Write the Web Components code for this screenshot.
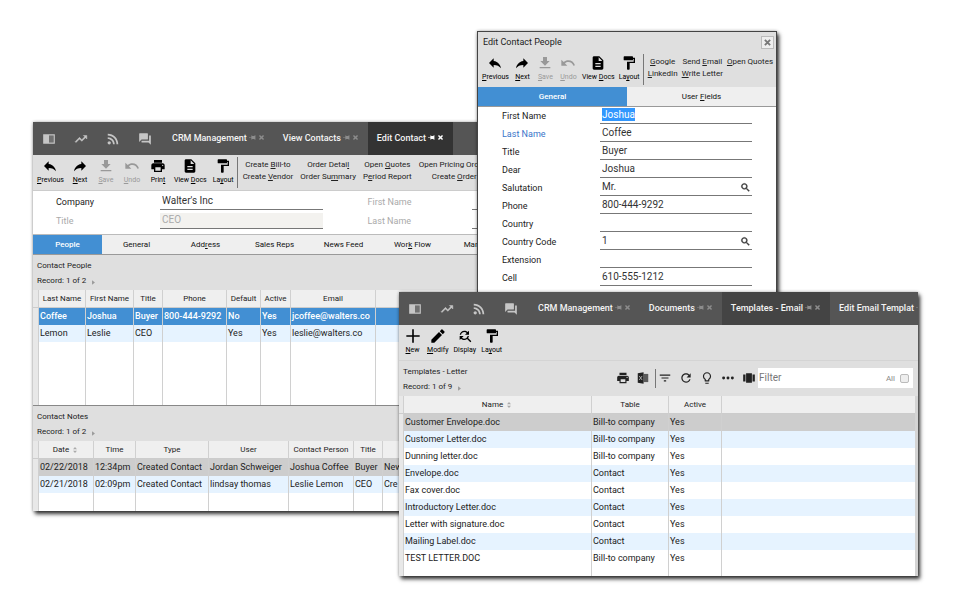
<!DOCTYPE html>
<html lang="en">
<head>
<meta charset="utf-8">
<title>CRM Management</title>
<style>
  html, body {
    margin: 0;
    height: 100%;
  }
  body {
    background: #fff;
    color: #222;
    font-family: Roboto, "Liberation Sans", sans-serif;
    font-size: 9px;
    overflow: hidden;
  }
</style>
</head>
<body>
<crm-desktop></crm-desktop>

<script>
const ICONS = {
  reader: '<path d="M2 4h10v16H2zM12 4h10v16H12v-2h8V6h-8z"/><path d="M12 6h8v12h-8z" opacity=".25"/>',
  trend: '<path d="M16 6l2.29 2.29-4.88 4.88-4-4L2 16.59 3.41 18l6-6 4 4 6.3-6.29L22 12V6z" stroke="currentColor" stroke-width=".8"/>',
  feed: '<circle cx="5.5" cy="18.5" r="2.8"/><path d="M3 3v3c8.300 0 15 6.700 15 15h3C21 11 13 3 3 3zm0 6v3c5 0 9 4 9 9h3c0-6.600-5.400-12-12-12z"/>',
  forum: '<path d="M22 6h-3v9H6v2c0 .55.45 1 1 1h11l4 4V6zm-5 6V3c0-.55-.45-1-1-1H3c-.55 0-1 .45-1 1v14l4-4h10c.55 0 1-.45 1-1z"/>',
  previous: '<path d="M10 9V5l-7 7 7 7v-4.1c5 0 8.5 1.6 11 5.1-1-5-4-10-11-11z"/>',
  next: '<path d="M14 9V5l7 7-7 7v-4.1c-5 0-8.500 1.600-11 5.100 1-5 4-10 11-11z"/>',
  save: '<path d="M19 9h-4V3H9v6H5l7 7 7-7zM4 18v2h16v-2H4z"/>',
  undo: '<path d="M12.500 8c-2.650 0-5.050.990-6.900 2.600L2 7v9h9l-3.620-3.620c1.390-1.160 3.160-1.880 5.120-1.880 3.540 0 6.550 2.310 7.600 5.500l2.370-.78C21.080 11.030 17.150 8 12.500 8z"/>',
  print: '<path d="M19 8H5c-1.660 0-3 1.340-3 3v6h4v4h12v-4h4v-6c0-1.660-1.340-3-3-3zm-3 11H8v-5h8v5zm3-7c-.55 0-1-.45-1-1s.45-1 1-1 1 .45 1 1-.45 1-1 1zm-1-9H6v4h12V3z"/>',
  docs: '<path d="M14 2H6c-1.1 0-2 .9-2 2v16c0 1.1.9 2 2 2h12c1.1 0 2-.9 2-2V8l-6-6zm2 16H8v-2h8v2zm0-4H8v-2h8v2zm-3-5V3.500L18.500 9H13z"/>',
  paint: '<path d="M18 4V3c0-.55-.45-1-1-1H5c-.55 0-1 .45-1 1v4c0 .55.45 1 1 1h12c.55 0 1-.45 1-1V6h1v4H9v11c0 .55.45 1 1 1h2c.55 0 1-.45 1-1v-9h8V4h-3z"/>',
  add: '<path d="M22 13.200h-8.800V22h-2.400v-8.800H2v-2.400h8.800V2h2.400v8.800H22z"/>',
  edit: '<path d="M2 17.500V22h4.500L18 10.500 13.500 6 2 17.500zM21.700 6.800c.4-.4.4-1 0-1.400l-3.100-3.100c-.4-.4-1-.4-1.400 0L14.700 4.800l4.500 4.500z"/>',
  display: '<path d="M11 6c1.380 0 2.630.56 3.540 1.460L12 10h6V4l-2.050 2.050C14.680 4.780 12.930 4 11 4c-3.530 0-6.430 2.610-6.920 6H6.100c.46-2.280 2.480-4 4.900-4zm5.640 9.140c.66-.9 1.120-1.970 1.280-3.140H15.900c-.46 2.280-2.480 4-4.900 4-1.380 0-2.630-.56-3.540-1.460L10 12H4v6l2.050-2.050C7.320 17.220 9.070 18 11 18c1.550 0 2.980-.51 4.140-1.360L20 21.490 21.490 20l-4.850-4.860z"/>',
  excel: '<path d="M13 2L3 4v16l10 2z"/><path d="M13 5h8v14h-8z" opacity=".7"/><path d="M5.500 8.500l5 7m0-7l-5 7" stroke="#bbb" stroke-width="1.500"/>',
  filter: '<path d="M10 18h4v-2h-4v2zM3 6v2h18V6H3zm3 7h12v-2H6v2z"/>',
  refresh: '<path d="M17.650 6.350C16.200 4.900 14.210 4 12 4c-4.420 0-7.990 3.580-7.990 8s3.570 8 7.990 8c3.730 0 6.840-2.550 7.730-6h-2.080c-.82 2.330-3.040 4-5.650 4-3.310 0-6-2.690-6-6s2.690-6 6-6c1.660 0 3.140.69 4.220 1.780L13 11h7V4l-2.350 2.350z"/>',
  bulb: '<path d="M9 21c0 .55.45 1 1 1h4c.55 0 1-.45 1-1v-1H9v1zm3-19C8.140 2 5 5.140 5 9c0 2.380 1.190 4.470 3 5.740V17c0 .55.45 1 1 1h6c.55 0 1-.45 1-1v-2.260c1.810-1.270 3-3.360 3-5.740 0-3.860-3.140-7-7-7zm2.850 11.100l-.85.6V16h-4v-2.300l-.85-.6C7.800 12.160 7 10.630 7 9c0-2.760 2.240-5 5-5s5 2.240 5 5c0 1.630-.8 3.160-2.150 4.100z"/>',
  more: '<circle cx="4.500" cy="12" r="2.500"/><circle cx="12" cy="12" r="2.500"/><circle cx="19.500" cy="12" r="2.500"/>',
  carousel: '<path d="M7 20h10V4H7v16zm-5-2h4V6H2v12zM18 6v12h4V6h-4z"/>',
  search: '<path d="M15.500 14h-.79l-.28-.27C15.410 12.590 16 11.110 16 9.500 16 5.910 13.090 3 9.500 3S3 5.910 3 9.500 5.910 16 9.500 16c1.610 0 3.090-.59 4.230-1.570l.27.28v.79l5 4.990L20.490 19l-4.990-5zm-6 0C7.010 14 5 11.990 5 9.500S7.010 5 9.500 5 14 7.010 14 9.500 11.990 14 9.500 14z" stroke="currentColor"/>',
  pin: '<path d="M0 11h8V5h3v2h8V4h3v16h-3v-3h-8v2H8v-6H0z"/>',
  close: '<path d="M5 5l14 14M19 5L5 19" stroke="currentColor" stroke-width="5"/>',
  sort: '<path d="M12 3l6 7H6zM12 21l6-7H6z"/>',
  right: '<path d="M7 4l10 8-10 8z"/>',
};

// "_Save" -> underlined S
function accel(text) {
  return text.replace(/_(.)/, "<u>$1</u>");
}

class IconGlyph extends HTMLElement {
  connectedCallback() {
    if (this.shadowRoot) return;
    this.attachShadow({ mode: "open" }).innerHTML = `
      <style>
        :host { display: inline-block; flex: none; width: 16px; height: 16px; }
        svg { display: block; width: 100%; height: 100%; fill: currentColor; }
      </style>
      <svg viewBox="0 0 24 24" aria-hidden="true">${ICONS[this.getAttribute("name")]}</svg>`;
  }
}
customElements.define("icon-glyph", IconGlyph);

class ToolButton extends HTMLElement {
  connectedCallback() {
    if (this.shadowRoot) return;
    const off = this.hasAttribute("disabled");
    this.attachShadow({ mode: "open" }).innerHTML = `
      <style>
        :host { display: block; flex: none; }
        button {
          display: flex;
          flex-direction: column;
          align-items: center;
          min-width: var(--tool-min, 20px);
          padding: 0;
          border: 0;
          background: none;
          color: #000;
          font: 7px/13px Roboto, sans-serif;
          white-space: nowrap;
        }
        button:disabled { color: #999; }
      </style>
      <button type="button" ${off ? "disabled" : ""}>
        <icon-glyph name="${this.getAttribute("icon")}"></icon-glyph>
        <span>${accel(this.getAttribute("label"))}</span>
      </button>`;
  }
}
customElements.define("tool-button", ToolButton);

// Pairs of links stacked in centred columns
class LinkColumn extends HTMLElement {
  connectedCallback() {
    if (this.shadowRoot) return;
    const links = this.getAttribute("links").split("|");
    this.attachShadow({ mode: "open" }).innerHTML = `
      <style>
        :host { display: flex; flex: none; flex-direction: column; align-items: center; }
        a { color: #222; font-size: 8px; line-height: 12px; text-decoration: none; white-space: nowrap; }
      </style>
      ${links.map((l) => `<a href="#">${accel(l)}</a>`).join("")}`;
  }
}
customElements.define("link-column", LinkColumn);

class ToolStrip extends HTMLElement {
  constructor() {
    super();
    this.attachShadow({ mode: "open" }).innerHTML = `
      <style>
        :host { display: flex; height: 31px; padding: 3px 0 1px 4px; overflow: hidden; background: #dfdfdf; }
        .tools { display: flex; gap: var(--tool-gap, 6px); }
        .links {
          display: flex;
          flex: none;
          gap: var(--link-gap, 7px);
          height: 31px;
          margin: -1px 0 0 3px;
          padding: 2px 0 0 var(--link-pad, 5px);
          border-left: 1px solid #777;
          box-sizing: border-box;
        }
        .links[hidden] { display: none; }
      </style>
      <div class="tools"><slot></slot></div>
      <nav class="links"><slot name="links"></slot></nav>`;
  }

  connectedCallback() {
    this.shadowRoot.querySelector(".links").hidden = this.hasAttribute("plain");
  }
}
customElements.define("tool-strip", ToolStrip);

// Dark bar with the module icons and the open pages
class PageBar extends HTMLElement {
  connectedCallback() {
    if (this.shadowRoot) return;
    const pages = this.getAttribute("pages").split("|");
    const active = this.getAttribute("active");
    this.attachShadow({ mode: "open" }).innerHTML = `
      <style>
        :host { display: flex; height: 33px; background: #555; overflow: hidden; }
        button { padding: 0; border: 0; background: none; color: inherit; font: inherit; white-space: nowrap; }
        .modules { display: flex; flex: none; gap: 18px; align-items: center; padding: 0 11px 0 9px; color: #c6c6c6; }
        .modules icon-glyph { display: block; width: 14px; height: 14px; }
        .page { display: flex; flex: none; align-items: center; gap: 2px; padding: 0 9px 2px; color: #f4f4f4; font-size: 9px; font-weight: 500; }
        .page .small { display: block; color: #8c8c8c; }
        .page icon-glyph { display: block; width: 7px; height: 7px; }
        .page.on { background: var(--page-on, #333); }
        .page.on .small { color: var(--page-mark, #fff); }
      </style>
      <div class="modules">
        ${["reader", "trend", "feed", "forum"]
          .map((n) => `<button type="button" aria-label="${n}"><icon-glyph name="${n}"></icon-glyph></button>`)
          .join("")}
      </div>
      ${pages
        .map((p) => `
          <div class="page ${p === active ? "on" : ""}">
            <button type="button">${p}</button>
            <button type="button" class="small" aria-label="Pin"><icon-glyph name="pin"></icon-glyph></button>
            <button type="button" class="small" aria-label="Close"><icon-glyph name="close"></icon-glyph></button>
          </div>`)
        .join("")}`;
  }
}
customElements.define("page-bar", PageBar);

class TabRow extends HTMLElement {
  connectedCallback() {
    if (this.shadowRoot) return;
    const tabs = this.getAttribute("tabs").split("|");
    this.attachShadow({ mode: "open" }).innerHTML = `
      <style>
        :host { display: flex; height: 19px; background: #efefef; border-bottom: 1px solid #999; overflow: hidden; }
        button { flex: 0 0 var(--tab-width, 10%); padding: 0; border: 0; background: none; color: #111; font: 8px/19px Roboto, sans-serif; white-space: nowrap; }
        button[aria-selected="true"] { background: #428fd3; color: #fff; font-weight: 500; }
      </style>
      ${tabs.map((t, i) => `<button type="button" role="tab" aria-selected="${i === 0}">${accel(t)}</button>`).join("")}`;
    this.setAttribute("role", "tablist");
  }
}
customElements.define("tab-row", TabRow);

class TextField extends HTMLElement {
  connectedCallback() {
    if (this.shadowRoot) return;
    const lookup = this.hasAttribute("lookup")
      ? '<button type="button" aria-label="Look up"><icon-glyph name="search"></icon-glyph></button>'
      : "";
    this.attachShadow({ mode: "open" }).innerHTML = `
      <style>
        :host { display: flex; height: 16px; }
        label { flex: none; width: var(--label-width, 104px); font-size: 9px; line-height: 17px; white-space: nowrap; }
        .box { display: flex; flex: 1; min-width: 0; border-bottom: 1px solid #777; }
        input { flex: 1; min-width: 0; height: 13px; padding: 0 2px; border: 0; outline: 0; background: none; color: #333; font: 10px/13px Roboto, sans-serif; }
        input::selection { background: #3297fd; color: #fff; }
        button { padding: 0 1px; border: 0; background: none; color: #333; }
        icon-glyph { display: block; width: 11px; height: 11px; }
        :host([muted]) label, :host([muted]) input { color: #aaa; }
        :host([shaded]) .box { background: #f3f2ef; }
        :host([accent]) label { color: #3a75c9; }
      </style>
      <label for="f">${this.getAttribute("label")}</label>
      <div class="box"><input id="f" type="text" value="${this.getAttribute("value") || ""}">${lookup}</div>`;
    if (this.hasAttribute("selected")) {
      const input = this.shadowRoot.querySelector("input");
      input.focus();
      input.select();
    }
  }
}
customElements.define("text-field", TextField);

class RecordHead extends HTMLElement {
  constructor() {
    super();
    this.attachShadow({ mode: "open" });
  }

  connectedCallback() {
    this.shadowRoot.innerHTML = `
      <style>
        :host { display: flex; justify-content: space-between; height: 35px; box-sizing: border-box; padding: 3px 5px 0 4px; background: #dfdfdf; }
        h2, p { margin: 0; font-size: 8px; font-weight: 400; line-height: 15px; white-space: nowrap; }
        p { display: flex; align-items: center; gap: 4px; }
        p icon-glyph { width: 7px; height: 7px; margin-top: 3px; color: #999; }
      </style>
      <div>
        <h2>${this.getAttribute("heading")}</h2>
        <p>Record: ${this.getAttribute("record")} <icon-glyph name="right"></icon-glyph></p>
      </div>
      <slot></slot>`;
  }
}
customElements.define("record-head", RecordHead);

class FilterTools extends HTMLElement {
  constructor() {
    super();
    this.attachShadow({ mode: "open" }).innerHTML = `
      <style>
        :host { display: flex; align-items: center; height: 28px; color: #222; }
        button { padding: 0; border: 0; background: none; color: inherit; }
        button icon-glyph { display: block; width: 14px; height: 14px; }
        .output, .view { display: flex; align-items: center; height: 19px; }
        .output { gap: 6px; padding-right: 5px; border-right: 1px solid #777; }
        .view { gap: 7px; padding: 0 2px; }
        .search { display: flex; align-items: center; width: 155px; height: 20px; background: #fff; color: #888; }
        .search input[type="text"] { flex: 1; min-width: 0; padding: 0 1px; border: 0; outline: 0; background: none; font: 10px/20px Roboto, sans-serif; }
        .search input::placeholder { color: #777; }
        .search label { font-size: 8px; }
        .search input[type="checkbox"] { appearance: none; width: 9px; height: 9px; margin: 0 4px 0 5px; border: 1px solid #bbb; border-radius: 2px; background: #eee; }
      </style>
      <div class="output">
        <button type="button" aria-label="Print"><icon-glyph name="print"></icon-glyph></button>
        <button type="button" aria-label="Export"><icon-glyph name="excel"></icon-glyph></button>
      </div>
      <div class="view">
        <button type="button" aria-label="Filters"><icon-glyph name="filter"></icon-glyph></button>
        <button type="button" aria-label="Refresh"><icon-glyph name="refresh"></icon-glyph></button>
        <button type="button" aria-label="Hints"><icon-glyph name="bulb"></icon-glyph></button>
        <button type="button" aria-label="More"><icon-glyph name="more"></icon-glyph></button>
        <button type="button" aria-label="Columns"><icon-glyph name="carousel"></icon-glyph></button>
      </div>
      <div class="search">
        <input type="text" placeholder="Filter" aria-label="Filter">
        <label for="all">All</label><input type="checkbox" id="all">
      </div>`;
  }
}
customElements.define("filter-tools", FilterTools);

const GRIDS = {
  people: {
    columns: [["Last Name", 47], ["First Name", 48], ["Title", 29], ["Phone", 64], ["Default", 34], ["Active", 30], ["Email", 85], ["", 0]],
    rows: [
      ["Coffee", "Joshua", "Buyer", "800-444-9292", "No", "Yes", "jcoffee@walters.co", ""],
      ["Lemon", "Leslie", "CEO", "", "Yes", "Yes", "leslie@walters.co", ""],
    ],
  },
  notes: {
    columns: [["Date", 55], ["Time", 42], ["Type", 73], ["User", 80], ["Contact Person", 65], ["Title", 29], ["", 0]],
    sort: "Date",
    rows: [
      ["02/22/2018", "12:34pm", "Created Contact", "Jordan Schweiger", "Joshua Coffee", "Buyer", "New"],
      ["02/21/2018", "02:09pm", "Created Contact", "lindsay thomas", "Leslie Lemon", "CEO", "Cre"],
    ],
  },
  templates: {
    columns: [["Name", 188], ["Table", 77], ["Active", 53], ["", 0]],
    sort: "Name",
    rows: [
      ["Customer Envelope.doc", "Bill-to company", "Yes", ""],
      ["Customer Letter.doc", "Bill-to company", "Yes", ""],
      ["Dunning letter.doc", "Bill-to company", "Yes", ""],
      ["Envelope.doc", "Contact", "Yes", ""],
      ["Fax cover.doc", "Contact", "Yes", ""],
      ["Introductory Letter.doc", "Contact", "Yes", ""],
      ["Letter with signature.doc", "Contact", "Yes", ""],
      ["Mailing Label.doc", "Contact", "Yes", ""],
      ["TEST LETTER.DOC", "Bill-to company", "Yes", ""],
    ],
  },
};

class DataGrid extends HTMLElement {
  connectedCallback() {
    if (this.shadowRoot) return;
    const grid = GRIDS[this.getAttribute("source")];
    const mark = (name) => (name === grid.sort ? ' <icon-glyph name="sort"></icon-glyph>' : "");
    this.attachShadow({ mode: "open" }).innerHTML = `
      <style>
        :host { display: block; background: #fff; border-right: 3px solid #d4d4d4; }
        table { width: 100%; table-layout: fixed; border-collapse: separate; border-spacing: 0; }
        .gutter { width: var(--gutter, 6px); }
        th, td { height: 17px; padding: 0 0 0 1px; box-sizing: border-box; border-right: 1px solid #d0d0d0; text-align: left; white-space: nowrap; overflow: hidden; }
        th { height: 18px; padding: 0; border-bottom: 1px solid #ccc; background: #efefef; font-size: 8px; font-weight: 400; line-height: 17px; text-align: center; }
        td { font-size: 9px; line-height: 17px; }
        th:last-child, td:last-child { border-right: 0; }
        th:first-child, td:first-child { background: #e8e8e8; }
        tr:nth-child(even) td:not(:first-child) { background: #e6f3ff; }
        tbody tr:first-child td:not(:first-child) { background: #cdcdcd; }
        :host([focused]) tbody tr:first-child td:not(:first-child) { background: #428fd3; color: #fff; font-weight: 500; }
        .rest td { height: var(--rest, 0); line-height: 0; }
        th icon-glyph { width: 8px; height: 8px; color: #aaa; vertical-align: middle; }
      </style>
      <table>
        <colgroup><col class="gutter">${grid.columns.map(([, w]) => `<col${w ? ` style="width: ${w}px"` : ""}>`).join("")}</colgroup>
        <thead><tr><th></th>${grid.columns.map(([n]) => `<th scope="col">${n}${mark(n)}</th>`).join("")}</tr></thead>
        <tbody>
          ${grid.rows.map((r) => `<tr><td></td>${r.map((c) => `<td>${c}</td>`).join("")}</tr>`).join("")}
        </tbody>
        <tfoot><tr class="rest"><td></td>${grid.columns.map(() => "<td></td>").join("")}</tr></tfoot>
      </table>`;
  }
}
customElements.define("data-grid", DataGrid);

class ContactWindow extends HTMLElement {
  constructor() {
    super();
    this.attachShadow({ mode: "open" }).innerHTML = `
      <style>
        :host { display: block; background: #dfdfdf; }
        .strip { border-bottom: 1px solid #ccc; }
        form { display: grid; grid-template-columns: 1fr 1fr; gap: 3px 45px; padding: 3px 89px 5px 23px; border-bottom: 1px solid #bbb; background: #fff; }
        .people { --rest: 63px; border-bottom: 1px solid #888; }
        .notes { --rest: 18px; }
      </style>
      <page-bar pages="CRM Management|View Contacts|Edit Contact" active="Edit Contact"></page-bar>
      <tool-strip class="strip">
        <tool-button icon="previous" label="_Previous"></tool-button>
        <tool-button icon="next" label="_Next"></tool-button>
        <tool-button icon="save" label="_Save" disabled></tool-button>
        <tool-button icon="undo" label="_Undo" disabled></tool-button>
        <tool-button icon="print" label="Prin_t"></tool-button>
        <tool-button icon="docs" label="View _Docs"></tool-button>
        <tool-button icon="paint" label="La_yout"></tool-button>
        <link-column slot="links" links="Create _Bill-to|Create _Vendor"></link-column>
        <link-column slot="links" links="Order Detai_l|Order Su_mmary"></link-column>
        <link-column slot="links" links="Open _Quotes|P_eriod Report"></link-column>
        <link-column slot="links" links="Open Pricing Orders|Create _Order"></link-column>
      </tool-strip>
      <form>
        <text-field label="Company" value="Walter's Inc"></text-field>
        <text-field label="First Name" muted></text-field>
        <text-field label="Title" value="CEO" muted shaded></text-field>
        <text-field label="Last Name" muted></text-field>
      </form>
      <tab-row tabs="People|General|Add_ress|Sales Reps|News Feed|Wor_k Flow|Marketing"></tab-row>
      <record-head heading="Contact People" record="1 of 2"></record-head>
      <data-grid class="people" source="people" focused></data-grid>
      <record-head heading="Contact Notes" record="1 of 2"></record-head>
      <data-grid class="notes" source="notes"></data-grid>`;
  }
}
customElements.define("contact-window", ContactWindow);

class PeopleDialog extends HTMLElement {
  constructor() {
    super();
    this.attachShadow({ mode: "open" }).innerHTML = `
      <style>
        :host { display: block; background: #fff; border: 1px solid #444; --tool-min: 19px; --tool-gap: 4px; --link-gap: 4px; --link-pad: 4px; --tab-width: 50%; --label-width: 98px; }
        header { display: flex; align-items: center; justify-content: space-between; height: 20px; padding: 0 2px 0 5px; background: #dfdfdf; }
        h1 { margin: 0; font-size: 9px; font-weight: 400; }
        header button { padding: 1px; border: 1px solid #bbb; background: #eee; color: #777; }
        header icon-glyph { display: block; width: 9px; height: 9px; }
        form { display: grid; gap: 2px; padding: 1px 24px 0 24px; }
      </style>
      <header>
        <h1>Edit Contact People</h1>
        <button type="button" aria-label="Close"><icon-glyph name="close"></icon-glyph></button>
      </header>
      <tool-strip>
        <tool-button icon="previous" label="_Previous"></tool-button>
        <tool-button icon="next" label="_Next"></tool-button>
        <tool-button icon="save" label="_Save" disabled></tool-button>
        <tool-button icon="undo" label="_Undo" disabled></tool-button>
        <tool-button icon="docs" label="View _Docs"></tool-button>
        <tool-button icon="paint" label="La_yout"></tool-button>
        <link-column slot="links" links="_Google|_LinkedIn"></link-column>
        <link-column slot="links" links="Send _Email|_Write Letter"></link-column>
        <link-column slot="links" links="_Open Quotes"></link-column>
      </tool-strip>
      <tab-row tabs="General|User _Fields"></tab-row>
      <form>
        <text-field label="First Name" value="Joshua" selected></text-field>
        <text-field label="Last Name" value="Coffee" accent></text-field>
        <text-field label="Title" value="Buyer"></text-field>
        <text-field label="Dear" value="Joshua"></text-field>
        <text-field label="Salutation" value="Mr." lookup></text-field>
        <text-field label="Phone" value="800-444-9292"></text-field>
        <text-field label="Country"></text-field>
        <text-field label="Country Code" value="1" lookup></text-field>
        <text-field label="Extension"></text-field>
        <text-field label="Cell" value="610-555-1212"></text-field>
        <text-field label="Home"></text-field>
      </form>`;
  }
}
customElements.define("people-dialog", PeopleDialog);

class TemplatesWindow extends HTMLElement {
  constructor() {
    super();
    this.attachShadow({ mode: "open" }).innerHTML = `
      <style>
        :host { display: block; background: #dfdfdf; --page-on: #444; --page-mark: #8c8c8c; --tool-min: 19px; --tool-gap: 5px; --gutter: 5px; }
        tool-strip { border-bottom: 1px solid #d4d4d4; }
        data-grid { --rest: 9px; }
      </style>
      <page-bar pages="CRM Management|Documents|Templates - Email|Edit Email Templat" active="Templates - Email"></page-bar>
      <tool-strip plain>
        <tool-button icon="add" label="_New"></tool-button>
        <tool-button icon="edit" label="_Modify"></tool-button>
        <tool-button icon="display" label="Display"></tool-button>
        <tool-button icon="paint" label="La_yout"></tool-button>
      </tool-strip>
      <record-head heading="Templates - Letter" record="1 of 9"><filter-tools></filter-tools></record-head>
      <data-grid source="templates"></data-grid>`;
  }
}
customElements.define("templates-window", TemplatesWindow);

class CrmDesktop extends HTMLElement {
  constructor() {
    super();
    this.attachShadow({ mode: "open" }).innerHTML = `
      <style>
        :host { display: block; position: relative; min-height: 100%; }
        contact-window, people-dialog, templates-window { position: absolute; box-shadow: 2px 3px 4px rgba(0, 0, 0, .8), 0 0 3px rgba(0, 0, 0, .3); }
        contact-window { top: 122px; left: 33px; right: 237px; }
        people-dialog { top: 31px; left: 477px; right: 183px; }
        templates-window { top: 292px; left: 399px; right: 42px; }
      </style>
      <contact-window></contact-window>
      <people-dialog></people-dialog>
      <templates-window></templates-window>`;
  }
}
customElements.define("crm-desktop", CrmDesktop);
</script>
</body>
</html>
